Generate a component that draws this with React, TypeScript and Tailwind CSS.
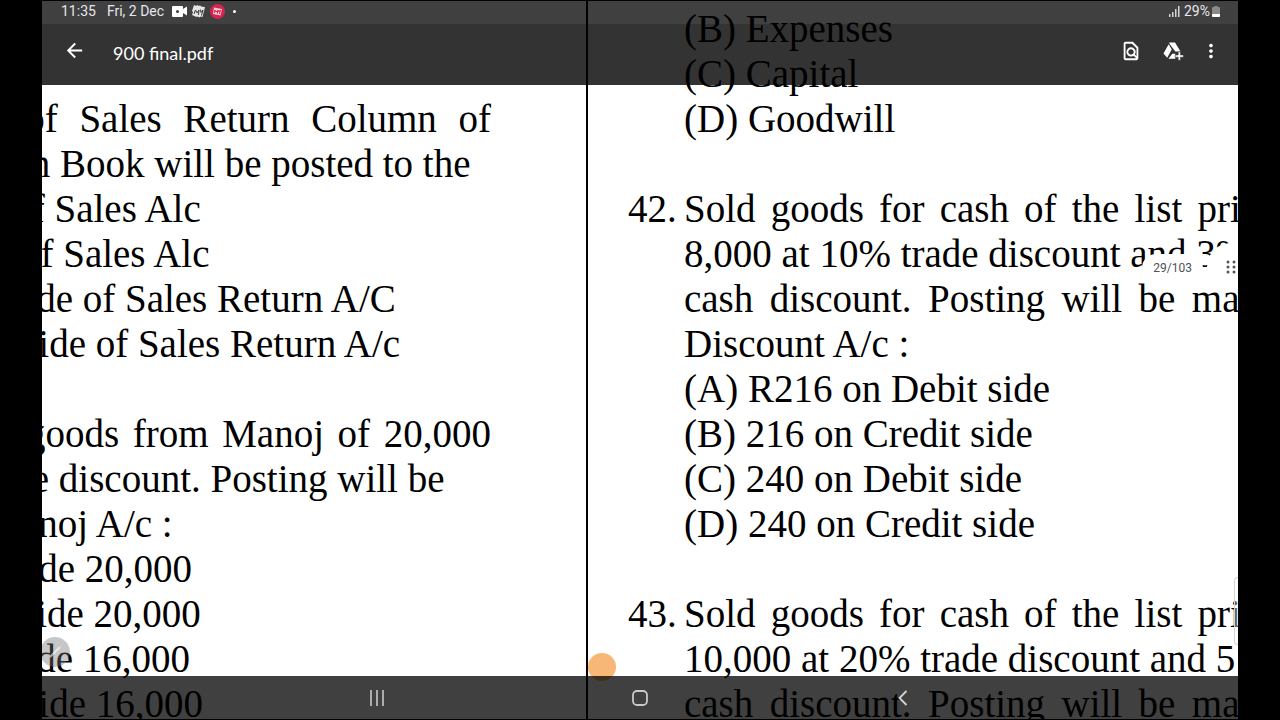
import type { ReactNode } from "react";
import { MdArrowBack, MdMoreVert, MdOutlineFindInPage } from "react-icons/md";

type Line = { text: string; justify?: boolean };
type Question = { no?: string; lines: Line[] };

const leftQuestions: Question[] = [
  {
    lines: [
      { text: "The total of Sales Return Column of", justify: true },
      { text: "Sales Return Book will be posted to the" },
      { text: "(A) Debit of Sales Alc" },
      { text: "(B) Credit of Sales Alc" },
      { text: "(C) Debit side of Sales Return A/C" },
      { text: "(D) Credit side of Sales Return A/c" },
    ],
  },
  {
    lines: [
      { text: "Purchased goods from Manoj of 20,000", justify: true },
      { text: "at 20% trade discount. Posting will be" },
      { text: "made in Manoj A/c :" },
      { text: "(A) Debit side 20,000" },
      { text: "(B) Credit side 20,000" },
      { text: "(C) Debit side 16,000" },
      { text: "(D) Credit side 16,000" },
    ],
  },
];

const rightQuestions: Question[] = [
  { lines: [{ text: "(B) Expenses" }, { text: "(C) Capital" }, { text: "(D) Goodwill" }] },
  {
    no: "42.",
    lines: [
      { text: "Sold goods for cash of the list price of", justify: true },
      { text: "8,000 at 10% trade discount and 3%" },
      { text: "cash discount. Posting will be made in", justify: true },
      { text: "Discount A/c :" },
      { text: "(A) R216 on Debit side" },
      { text: "(B) 216 on Credit side" },
      { text: "(C) 240 on Debit side" },
      { text: "(D) 240 on Credit side" },
    ],
  },
  {
    no: "43.",
    lines: [
      { text: "Sold goods for cash of the list price of", justify: true },
      { text: "10,000 at 20% trade discount and 5" },
      { text: "cash discount. Posting will be made in", justify: true },
    ],
  },
];

function Lines({ lines }: { lines: Line[] }) {
  return (
    <div className="w-[639px] shrink-0">
      {lines.map((l) => (
        <p key={l.text} className={l.justify ? "[text-align-last:justify]" : "whitespace-nowrap"}>
          {l.text}
        </p>
      ))}
    </div>
  );
}

function IconButton({ label, className, children }: { label: string; className?: string; children: ReactNode }) {
  return (
    <button type="button" aria-label={label} className={`flex items-center justify-center ${className ?? ""}`}>
      {children}
    </button>
  );
}

function StatusBar() {
  return (
    <div className="flex h-[23px] items-center justify-between bg-black/75 pl-[19px] pr-[18px] pb-[3px] text-sm leading-5 text-gray-200">
      <div className="flex items-center">
        <span>11:35</span>
        <span className="ml-[11px]">Fri, 2 Dec</span>
        <svg className="ml-2" width="15" height="12" viewBox="0 0 15 12">
          <path d="M1 1h9q1 0 1 1v2l4-2.500v9L11 8v3q0 1-1 1H1q-1 0-1-1V2q0-1 1-1z" fill="#fff" />
          <circle cx="5.500" cy="6.500" r="1.500" fill="#3d3d3d" />
        </svg>
        <svg className="ml-1" width="15" height="15" viewBox="0 0 15 15">
          <path d="M3 1l2 1 1-1 2 1 1-.5 2 1.200 3 .3-2.500 10-2-.5-1 1-2-1-1 .5L1 11l1-3-1-1z" fill="#e5e5e5" />
          <path d="M3 10l1.500-4 1.500 3 2-3-.5 5M9.500 5.500l.5 3 2-2.500-1.500 5.500" fill="none" stroke="#3d3d3d" />
        </svg>
        <svg className="ml-1" width="15" height="15" viewBox="0 0 15 15">
          <circle cx="7.500" cy="7.500" r="7.500" fill="#d6244f" />
          <path d="M4 3.500l8 1.500-1.500 6.500L3 10z" fill="#f6c9d4" />
          <path d="M4.500 9l.5-3 1 2 1.500-1.500v3M8.500 6l.5 2 1.500-2-1 4" fill="none" stroke="#d6244f" />
        </svg>
        <span className="ml-2 size-[3px] rounded-full bg-white" />
      </div>
      <div className="flex items-center">
        <svg width="11" height="11" viewBox="0 0 11 11" fill="#d4d4d4">
          <rect x="0" y="8" width="1.500" height="3" />
          <rect x="3" y="6" width="1.500" height="5" />
          <rect x="6" y="3" width="1.500" height="8" />
          <rect x="9" y="0" width="1.500" height="11" />
        </svg>
        <span className="ml-1">29%</span>
        <svg className="ml-0.5" width="8" height="11" viewBox="0 0 8 11">
          <path d="M2.500 0h3v1H7q1 0 1 1v8q0 1-1 1H1q-1 0-1-1V2q0-1 1-1h1.500z" fill="#8a8a8a" />
          <path d="M0 8h8v2q0 1-1 1H1q-1 0-1-1z" fill="#fff" />
        </svg>
      </div>
    </div>
  );
}

function TopBar() {
  return (
    <header className="absolute inset-x-0 top-0 font-['Roboto',sans-serif]">
      <StatusBar />
      <div className="flex h-[61px] items-center bg-black/80 pl-[21px] pr-4 pb-2 text-white">
        <IconButton label="Back">
          <MdArrowBack size={23} />
        </IconButton>
        <h1 className="ml-[27px] flex-1 pt-1 font-['Lato',sans-serif] text-lg leading-6">900 final.pdf</h1>
        <IconButton label="Find in page" className="mr-5">
          <MdOutlineFindInPage size={22} />
        </IconButton>
        <IconButton label="Add to Drive" className="mr-4">
          <svg width="22" height="20" viewBox="0 0 22 20" fill="#fff">
            <path d="M7 1.500h6l5.500 9h-5.200L8.200 3.800z" />
            <path d="M6.700 3.200l3 5.300-4.500 8.300-3.700-4.400z" />
            <path d="M10.300 12.800h3v5H6.500z" />
            <path d="M16.200 11h2.200v3h3v2.200h-3v3h-2.200v-3h-3V14h3z" stroke="#333" strokeWidth="0.500" />
          </svg>
        </IconButton>
        <IconButton label="More options">
          <MdMoreVert size={22} />
        </IconButton>
      </div>
    </header>
  );
}

function NavBar() {
  return (
    <nav className="absolute inset-x-0 bottom-0 flex h-[43px] items-center justify-center bg-black/75">
      <IconButton label="Recents" className="w-[263px]">
        <svg width="16" height="16" viewBox="0 0 16 16" stroke="#c8c8c8" strokeWidth="1.6">
          <path d="M2 0v16M8 0v16M14 0v16" />
        </svg>
      </IconButton>
      <IconButton label="Home" className="w-[263px]">
        <svg width="16" height="16" viewBox="0 0 16 16" fill="none" stroke="#c8c8c8" strokeWidth="1.800">
          <rect x="1" y="1" width="14" height="14" rx="4" />
        </svg>
      </IconButton>
      <IconButton label="Back" className="w-[263px]">
        <svg width="16" height="16" viewBox="0 0 16 16" fill="none" stroke="#d4d4d4" strokeWidth="1.800">
          <path d="M11.500 1L4.500 8l7 7" />
        </svg>
      </IconButton>
    </nav>
  );
}

export default function App() {
  return (
    <div className="h-screen bg-black px-[42px] py-px">
      <div className="relative h-full overflow-hidden bg-white">
        <main className="flex h-full font-['Liberation_Serif',serif] text-[39px] leading-[45px] text-black">
          <section className="w-[546px] shrink-0 overflow-hidden border-r-2 border-black pt-[95px]">
            <div className="-ml-[190px] flex flex-col gap-[45px]">
              {leftQuestions.map((q, i) => (
                <Lines key={i} lines={q.lines} />
              ))}
            </div>
          </section>
          <section className="flex min-w-0 flex-1 flex-col gap-[45px] overflow-hidden pl-10 pt-[5px]">
            {rightQuestions.map((q, i) => (
              <div key={i} className="flex">
                <span className="w-14 shrink-0">{q.no}</span>
                <Lines lines={q.lines} />
              </div>
            ))}
          </section>
        </main>

        {/* floating edit button, half off the page */}
        <button
          type="button"
          aria-label="Edit"
          className="absolute bottom-[52px] -left-0.5 flex size-[30px] items-center justify-center rounded-full bg-neutral-500/40"
        >
          <svg width="14" height="14" viewBox="0 0 14 14" stroke="#fff" strokeOpacity="0.6" strokeWidth="2">
            <path d="M2 12L12 2" />
          </svg>
        </button>
        <span className="absolute bottom-[38px] left-[546px] size-7 rounded-full bg-[#f7b877]" />

        {/* fast scroll handle */}
        <span className="absolute top-[253px] right-[35px] rounded-full bg-white px-[11px] py-1.5 font-['Roboto',sans-serif] text-xs leading-4 text-neutral-600">
          29/103
        </span>
        <button
          type="button"
          aria-label="Scroll"
          className="absolute top-[242px] -right-[17px] flex size-12 items-center justify-center rounded-full bg-white"
        >
          <svg width="10" height="16" viewBox="0 0 10 16" fill="#555">
            <circle cx="2" cy="3" r="1.500" />
            <circle cx="8" cy="3" r="1.500" />
            <circle cx="2" cy="8" r="1.500" />
            <circle cx="8" cy="8" r="1.500" />
            <circle cx="2" cy="13" r="1.500" />
            <circle cx="8" cy="13" r="1.500" />
          </svg>
        </button>
        <span className="absolute right-0 bottom-[74px] h-[68px] w-1 rounded-l-sm border border-r-0 border-neutral-300 bg-white/40" />

        <NavBar />
        <TopBar />
      </div>
    </div>
  );
}
